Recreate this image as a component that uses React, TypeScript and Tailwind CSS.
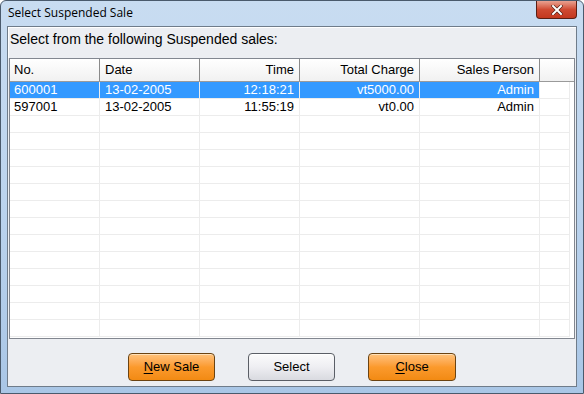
import React from "react";

type Sale = {
  no: string;
  date: string;
  time: string;
  total: string;
  person: string;
};

const sales: Sale[] = [
  { no: "600001", date: "13-02-2005", time: "12:18:21", total: "vt5000.00", person: "Admin" },
  { no: "597001", date: "13-02-2005", time: "11:55:19", total: "vt0.00", person: "Admin" },
];

const EMPTY_ROWS = 13;

export default function App() {
  return (
    <div
      className="w-[584px] h-[394px] overflow-hidden bg-gradient-to-b from-[#c8dcf1] via-[#bcd4ee] to-[#a9c6e6] border border-[#4a5a6c] rounded-t-[6px] flex flex-col text-[13px] text-black"
      style={{ fontFamily: "Tahoma, 'Liberation Sans', 'DejaVu Sans', sans-serif" }}
    >
      {/* Barre de titre */}
      <div className="h-[25px] flex items-start justify-between shrink-0">
        <span
          className="pl-[7px] pt-[5px] text-[12px] text-black leading-[14px]"
          style={{ fontFamily: "'Segoe UI', 'Open Sans', 'Liberation Sans', sans-serif" }}
        >
          Select Suspended Sale
        </span>
        <button className="mr-[6px] w-[41px] h-[18px] rounded-b-[4px] border border-t-0 border-[#5a1f14] bg-gradient-to-b from-[#e8a191] via-[#cf4a32] to-[#c3381f] flex items-center justify-center">
          <svg width="12" height="10" viewBox="0 0 12 10">
            <path d="M2 1 L10 9 M10 1 L2 9" stroke="#4a1a10" strokeWidth="3.2" strokeLinecap="square" />
            <path d="M2 1 L10 9 M10 1 L2 9" stroke="#ffffff" strokeWidth="2" strokeLinecap="square" />
          </svg>
        </button>
      </div>

      {/* Zone client */}
      <div className="mx-[6px] mb-[6px] flex-1 border border-[#6f7c8a] bg-[#eceef2] flex flex-col">
        <div className="h-[31px] pl-[1px] pt-[3px] border-t border-l border-white text-[14px] leading-[17px]">
          Select from the following Suspended sales:
        </div>

        {/* Grille */}
        <div className="mx-[1px] h-[281px] border border-[#828790] bg-white flex flex-col overflow-hidden">
          <div className="h-[23px] flex shrink-0 border-b border-[#9a9a9a] bg-gradient-to-b from-[#ffffff] to-[#f1f1f1]">
            <div className="w-[90px] border-r border-[#8a8a8a] pl-[4px] leading-[22px]">No.</div>
            <div className="w-[100px] border-r border-[#8a8a8a] pl-[5px] leading-[22px]">Date</div>
            <div className="w-[100px] border-r border-[#8a8a8a] pr-[5px] text-right leading-[22px]">Time</div>
            <div className="w-[120px] border-r border-[#8a8a8a] pr-[5px] text-right leading-[22px]">Total Charge</div>
            <div className="w-[120px] border-r border-[#8a8a8a] pr-[5px] text-right leading-[22px]">Sales Person</div>
            <div className="flex-1" />
          </div>

          {sales.map((s, i) => {
            const sel = i === 0;
            return (
              <div key={s.no} className="h-[17px] flex shrink-0 leading-[16px]">
                <div className={`w-[90px] border-r border-b border-[#ececec] pl-[4px] ${sel ? "bg-[#3399ff] text-white" : ""}`}>{s.no}</div>
                <div className={`w-[100px] border-r border-b border-[#ececec] pl-[5px] ${sel ? "bg-[#3399ff] text-white" : ""}`}>{s.date}</div>
                <div className={`w-[100px] border-r border-b border-[#ececec] pr-[5px] text-right ${sel ? "bg-[#3399ff] text-white" : ""}`}>{s.time}</div>
                <div className={`w-[120px] border-r border-b border-[#ececec] pr-[5px] text-right ${sel ? "bg-[#3399ff] text-white" : ""}`}>{s.total}</div>
                <div className={`w-[120px] border-r border-b border-[#ececec] pr-[5px] text-right ${sel ? "bg-[#3399ff] text-white" : ""}`}>{s.person}</div>
                <div className="w-[30px] border-r border-b border-[#ececec]" />
                <div className="flex-1" />
              </div>
            );
          })}

          {Array.from({ length: EMPTY_ROWS }).map((_, i) => (
            <div key={i} className="h-[17px] flex shrink-0">
              <div className="w-[90px] border-r border-b border-[#ececec]" />
              <div className="w-[100px] border-r border-b border-[#ececec]" />
              <div className="w-[100px] border-r border-b border-[#ececec]" />
              <div className="w-[120px] border-r border-b border-[#ececec]" />
              <div className="w-[120px] border-r border-b border-[#ececec]" />
              <div className="w-[30px] border-r border-b border-[#ececec]" />
              <div className="flex-1" />
            </div>
          ))}
        </div>

        {/* Boutons */}
        <div className="flex-1 flex items-start justify-center gap-[33px] pt-[14px]">
          <button className="w-[87px] h-[28px] rounded-[4px] border border-[#6b4312] bg-gradient-to-b from-[#ffc27a] via-[#fb9a2c] to-[#f28a12] shadow-[inset_0_1px_0_#ffe0b8]">
            <span className="underline underline-offset-2">N</span>ew Sale
          </button>
          <button className="w-[87px] h-[28px] rounded-[4px] border border-[#5a5e66] bg-gradient-to-b from-[#fbfbfc] via-[#eeeef2] to-[#d9dae0] shadow-[inset_0_1px_0_#ffffff]">
            Select
          </button>
          <button className="w-[88px] h-[28px] rounded-[4px] border border-[#6b4312] bg-gradient-to-b from-[#ffc27a] via-[#fb9a2c] to-[#f28a12] shadow-[inset_0_1px_0_#ffe0b8]">
            <span className="underline underline-offset-2">C</span>lose
          </button>
        </div>
      </div>
    </div>
  );
}
